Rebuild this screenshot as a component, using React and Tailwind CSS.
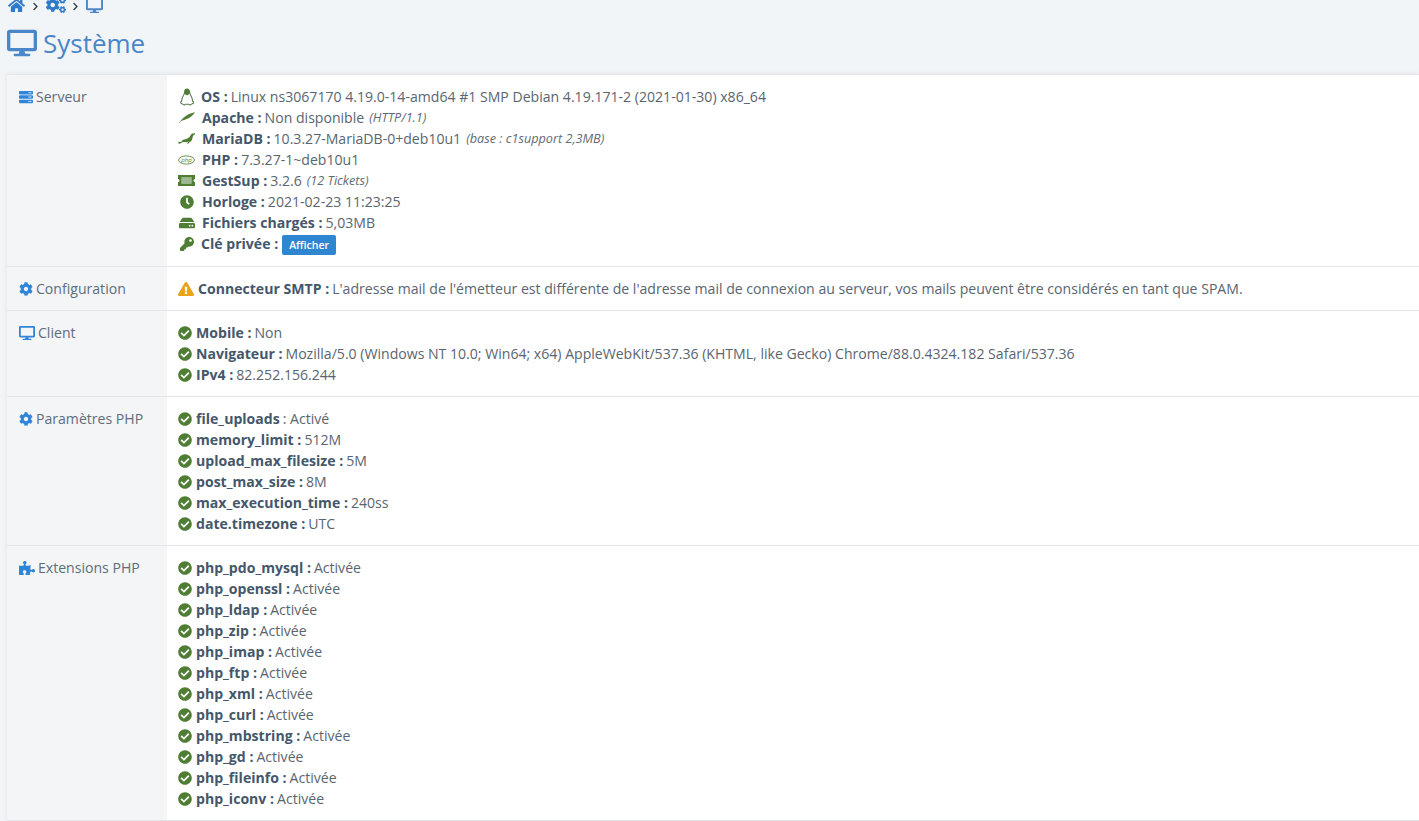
import { FaHome, FaCogs, FaDesktop, FaServer, FaCog, FaPuzzlePiece, FaCheckCircle, FaExclamationTriangle, FaKey, FaClock, FaHdd, FaChevronRight } from "react-icons/fa";
import { SiMariadb } from "react-icons/si";

const green = "text-[#4f7d33]";

// icones dessinees (pas d'equivalent dans les packs)
function Penguin({ className }) {
  return (
    <svg width="14" height="18" viewBox="0 0 14 18" fill="none" className={className}>
      <path d="M7 1c-1.6 0-2.3 1.3-2.3 2.8 0 1.6-.5 2.5-1.4 3.9C2.300 9.300 1.500 11 1.700 13c-.7.6-1.200 1.200-1 1.900.3.800 1.500.900 2.500 1.700.8.600 1.800.300 2.200-.4h3.400c.4.700 1.400 1 2.200.4 1-.8 2.200-.9 2.500-1.700.2-.7-.3-1.300-1-1.900.2-2-.6-3.700-1.600-5.300-.9-1.400-1.400-2.300-1.400-3.900C9.300 2.300 8.600 1 7 1Z" stroke="#5c7a50" strokeWidth="1.100" />
      <path d="M7 1c-1.600 0-2.300 1.300-2.300 2.800 0 .8-.1 1.400-.3 2L7 7.500l2.600-1.700c-.2-.6-.3-1.200-.3-2C9.300 2.300 8.600 1 7 1Z" fill="#4f7d33" />
    </svg>
  );
}

function Leaf({ className }) {
  return (
    <svg width="16" height="11" viewBox="0 0 16 11" className={className}>
      <path d="M0 10.800C2 7.800 6 3.800 10 2 12 1.100 14.500.4 16 .2 14.500 2.500 12 5 9 6.500 6.500 7.700 3.500 8.200 1.800 9.300L.5 11Z" fill="#4f7d33" />
    </svg>
  );
}

function PhpLogo({ className }) {
  return (
    <svg width="18" height="10" viewBox="0 0 18 10" className={className}>
      <ellipse cx="9" cy="5" rx="8.400" ry="4.300" fill="none" stroke="#4f7d33" strokeWidth="0.9" />
      <text x="9" y="7" textAnchor="middle" fontSize="6.500" fontStyle="italic" fill="#4f7d33" fontFamily="Open Sans, sans-serif">php</text>
    </svg>
  );
}

function Ticket({ className }) {
  return (
    <svg width="17" height="11" viewBox="0 0 17 11" className={className}>
      <path fillRule="evenodd" d="M0 0h17v4a1.500 1.500 0 0 0 0 3v4H0V7a1.500 1.500 0 0 0 0-3V0Zm3.500 2.200v6.600h10V2.200h-10Z" fill="#4f7d33" />
      <rect x="3.500" y="2.200" width="10" height="6.600" fill="#4f7d33" opacity="0.55" />
    </svg>
  );
}

// ligne du serveur avec icone verte
function ServerLine({ icon, label, value, note, tight }) {
  return (
    <div className="flex h-[21px] items-center">
      <span className="flex w-[17px] shrink-0 justify-center">{icon}</span>
      <b className={`font-bold text-[#44576b] ${tight ? "ml-[6px]" : "ml-[7px]"}`}>{label} :</b>
      <span className="ml-[3px]">{value}</span>
      {note && <i className="ml-[5px] text-[12.670px] text-[#5f6b76]">{note}</i>}
    </div>
  );
}

function CheckLine({ label, value, plain }) {
  return (
    <div className="flex h-[21px] items-center">
      <FaCheckCircle size={14} className={`${green} mr-[4px] shrink-0`} />
      <b className="font-bold text-[#44576b]">
        {label}
        {!plain && " :"}
      </b>
      <span className="ml-[3px]">
        {plain && ": "}
        {value}
      </span>
    </div>
  );
}

function Row({ icon: Icon, iconSize = 14, label, gap = "ml-[3px]", bottom = "pb-[11px]", children }) {
  return (
    <div className="flex border-b border-[#e3e6ea]">
      <div className="flex w-[160px] shrink-0 items-start bg-[#f3f5f7] pl-[12px] pt-[11px] text-[#5f6d7a]">
        <span className="flex h-[21px] items-center">
          <Icon size={iconSize} className="text-[#2f86d8]" />
          <span className={gap}>{label}</span>
        </span>
      </div>
      <div className={`min-w-0 flex-1 bg-white pl-[11px] pt-[11px] ${bottom}`}>{children}</div>
    </div>
  );
}

const phpParams = [
  ["file_uploads", "Activé", true],
  ["memory_limit", "512M"],
  ["upload_max_filesize", "5M"],
  ["post_max_size", "8M"],
  ["max_execution_time", "240ss"],
  ["date.timezone", "UTC"],
];

const extensions = ["pdo_mysql", "openssl", "ldap", "zip", "imap", "ftp", "xml", "curl", "mbstring", "gd", "fileinfo", "iconv"];

export default function App() {
  return (
    <div className="min-h-screen overflow-hidden bg-[#f1f5f8] font-['Open_Sans',sans-serif] text-[14.080px] leading-[21px] text-[#5a6570]">
      {/* fil d'ariane */}
      <div className="flex h-[13px] items-end overflow-hidden pl-[8px]">
        <FaHome size={17} className="mb-[-1px] text-[#2f7bc8]" />
        <FaChevronRight size={9} className="mb-[2px] ml-[6px] text-[#444]" />
        <FaCogs size={20} className="mb-[-2px] ml-[6px] text-[#2f7bc8]" />
        <FaChevronRight size={9} className="mb-[2px] ml-[5px] text-[#444]" />
        <FaDesktop size={17} className="mb-[-1px] ml-[6px] text-[#4a86c8]" />
      </div>

      {/* titre */}
      <div className="flex h-[61px] items-center pb-[1px] pl-[7px]">
        <FaDesktop size={30} className="text-[#4a86c8]" />
        <h1 className="ml-[6px] text-[26px] font-normal leading-[32px] text-[#4a86c8]">Système</h1>
      </div>

      <div className="ml-[7px] border-t border-[#e3e6ea] shadow-[0_0_5px_rgba(0,0,0,0.07)]">
        <Row icon={FaServer} label="Serveur" bottom="pb-[12px]">
          <ServerLine icon={<Penguin />} tight label="OS" value="Linux ns3067170 4.19.0-14-amd64 #1 SMP Debian 4.19.171-2 (2021-01-30) x86_64" />
          <ServerLine icon={<Leaf />} label="Apache" value="Non disponible" note="(HTTP/1.1)" />
          <ServerLine icon={<SiMariadb size={17} className={green} />} label="MariaDB" value="10.3.27-MariaDB-0+deb10u1" note="(base : c1support 2,3MB)" />
          <ServerLine icon={<PhpLogo />} label="PHP" value="7.3.27-1~deb10u1" />
          <ServerLine icon={<Ticket />} label="GestSup" value="3.2.6" note="(12 Tickets)" />
          <ServerLine icon={<FaClock size={14} className={green} />} label="Horloge" value="2021-02-23 11:23:25" />
          <ServerLine icon={<FaHdd size={16} className={green} />} label="Fichiers chargés" value="5,03MB" />
          <div className="flex h-[21px] items-center">
            <span className="flex w-[17px] shrink-0 justify-center">
              <FaKey size={14} className={green} />
            </span>
            <b className="ml-[6px] font-bold text-[#44576b]">Clé privée :</b>
            <button className="ml-1 mt-[2px] h-[20px] rounded-[2px] bg-[#2f86d0] px-[7px] text-[10.500px] font-semibold leading-[20px] text-white">Afficher</button>
          </div>
        </Row>

        <Row icon={FaCog} label="Configuration" gap="ml-[3px]">
          <div className="flex h-[21px] items-center">
            <FaExclamationTriangle size={16} className="mr-[4px] shrink-0 text-[#e8a317]" />
            <b className="font-bold text-[#44576b]">Connecteur SMTP :</b>
            <span className="ml-[3px]">L'adresse mail de l'émetteur est différente de l'adresse mail de connexion au serveur, vos mails peuvent être considérés en tant que SPAM.</span>
          </div>
        </Row>

        <Row icon={FaDesktop} iconSize={16} label="Client" gap="ml-[3px]">
          <CheckLine label="Mobile" value="Non" />
          <CheckLine label="Navigateur" value="Mozilla/5.0 (Windows NT 10.0; Win64; x64) AppleWebKit/537.36 (KHTML, like Gecko) Chrome/88.0.4324.182 Safari/537.36" />
          <CheckLine label="IPv4" value="82.252.156.244" />
        </Row>

        <Row icon={FaCog} label="Paramètres PHP" gap="ml-[3px]">
          {phpParams.map(([label, value, plain]) => (
            <CheckLine key={label} label={label} value={value} plain={plain} />
          ))}
        </Row>

        <Row icon={FaPuzzlePiece} iconSize={16} label="Extensions PHP" gap="ml-[3px]">
          {extensions.map((ext) => (
            <CheckLine key={ext} label={`php_${ext}`} value="Activée" />
          ))}
        </Row>
      </div>
    </div>
  );
}
